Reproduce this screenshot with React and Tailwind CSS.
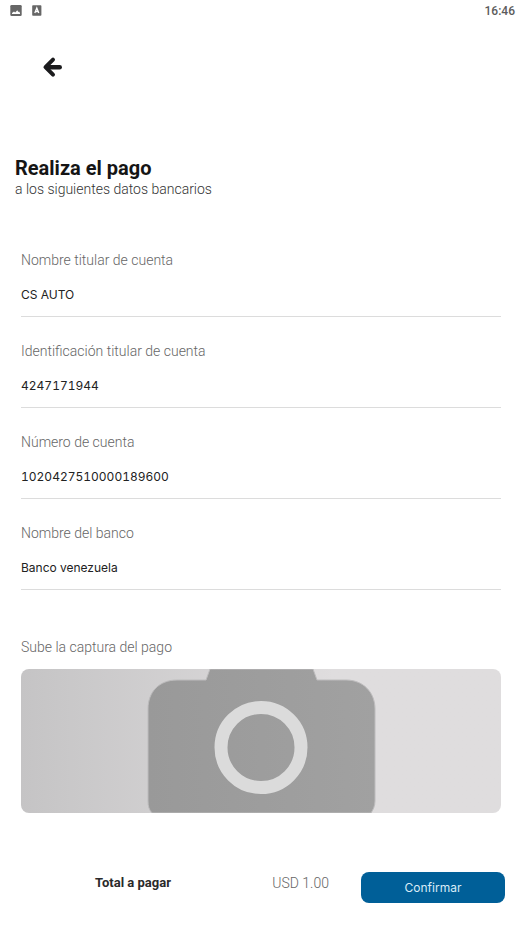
import { useState } from "react";

const initialFields = [
  { id: "holder", label: "Nombre titular de cuenta", value: "CS AUTO" },
  { id: "document", label: "Identificación titular de cuenta", value: "4247171944" },
  { id: "account", label: "Número de cuenta", value: "1020427510000189600" },
  { id: "bank", label: "Nombre del banco", value: "Banco venezuela" },
];

function StatusBar() {
  return (
    <div className="flex h-[22px] items-center justify-between pl-[10px] pr-[7px]">
      <div className="flex items-center gap-[10px]">
        <svg className="h-3 w-3" viewBox="0 0 12 12" aria-hidden="true">
          <rect x="0.3" y="0" width="11.4" height="11" rx="1.3" fill="#666" />
          <path d="M2 9V8L4 6.500l1.200 1.100L7.300 5.300l1 1.700.8-.5.9 1.400V9z" fill="#fff" />
        </svg>
        <svg className="h-3 w-[10px]" viewBox="0 0 10 12" aria-hidden="true">
          <rect x="0.2" y="0.2" width="9.2" height="10.6" rx="0.8" fill="#666" />
          <path d="M2.800 8 4.800 3 6.800 8M3.400 6.500h2.800" fill="none" stroke="#fff" strokeWidth="1.3" />
        </svg>
      </div>
      <time className="text-[12px] leading-4 font-medium text-[#5c5c5c]">16:46</time>
    </div>
  );
}

function Field({ id, label, value, onChange }) {
  return (
    <div className="flex h-[91px] flex-col">
      <label htmlFor={id} className="text-[14px] leading-5 font-light text-[#666]">
        {label}
      </label>
      <input
        id={id}
        value={value}
        onChange={onChange}
        className="mt-3 h-[35px] w-full border-b border-[#dcdcdc] bg-transparent pb-[10px] font-['Inter',sans-serif] text-[12px] leading-5 text-[#222] tabular-nums outline-none"
      />
    </div>
  );
}

function UploadBox() {
  return (
    <label
      htmlFor="capture"
      aria-label="Sube la captura del pago"
      className="mt-3 block h-36 cursor-pointer overflow-hidden rounded-lg bg-linear-to-r from-[#c5c4c5] via-[#dfddde] via-65% to-[#dfddde]"
    >
      <svg className="h-full w-full" viewBox="0 0 480 144" preserveAspectRatio="xMidYMid slice" aria-hidden="true">
        <defs>
          <linearGradient id="body" x1="0" x2="1" y1="0" y2="0">
            <stop offset="0" stopColor="#999" />
            <stop offset="1" stopColor="#a1a1a1" />
          </linearGradient>
        </defs>
        <path
          d="M127 40C127 23 138 11 156 11H185L189 0H292L296 11H325C342 11 354 23 354 40V132C354 137 352 141 350 144H131C128 141 127 137 127 132Z"
          fill="url(#body)"
          stroke="#bdbcbd"
          strokeWidth="1"
        />
        <circle cx="240" cy="78.500" r="40" fill="none" stroke="#dbdbdb" strokeWidth="13" />
      </svg>
      <input id="capture" type="file" accept="image/*" className="sr-only" />
    </label>
  );
}

export default function App() {
  const [fields, setFields] = useState(initialFields);
  const update = (id, value) =>
    setFields(fields.map((field) => (field.id === id ? { ...field, value } : field)));

  return (
    <main className="min-h-screen bg-white font-['Roboto',sans-serif]">
      <StatusBar />
      <header className="px-10 pt-8">
        <button type="button" aria-label="Volver" className="block h-[26px] w-[26px]">
          <svg className="h-[26px] w-[26px]" viewBox="0 0 26 26" fill="none" stroke="#1b1b1d" strokeLinecap="round" strokeLinejoin="round" aria-hidden="true">
            <path d="M13 5.700 5.500 13.200l7.500 7.500" strokeWidth="4" />
            <path d="M7 13.200h12.700" strokeWidth="4.500" />
          </svg>
        </button>
      </header>

      <section className="mt-[76px] px-[15px]">
        <h1 className="text-[20px] leading-6 font-bold text-[#151515]">Realiza el pago</h1>
        <p className="text-[14px] leading-[18px] font-light text-[#333]">a los siguientes datos bancarios</p>
      </section>

      <form onSubmit={(event) => event.preventDefault()}>
        <div className="mt-[52px] px-[21px]">
          {fields.map((field) => (
            <Field key={field.id} {...field} onChange={(event) => update(field.id, event.target.value)} />
          ))}
          <p className="mt-[23px] text-[14px] leading-5 font-light text-[#666]">Sube la captura del pago</p>
          <UploadBox />
        </div>

        <footer className="mt-[59px] flex items-start pr-[17px] pb-6">
          <div className="flex flex-1 items-center justify-between pt-px pr-8 pl-[95px]">
            <span className="text-[13px] leading-5 font-bold text-[#2a2a2a]">Total a pagar</span>
            <span className="text-[14px] leading-5 font-light text-[#666]">USD 1.00</span>
          </div>
          <button
            type="submit"
            className="h-[31px] w-36 rounded-lg bg-[#005f98] font-['Inter',sans-serif] text-[12px] leading-5 text-[#d9ecf7]"
          >
            Confirmar
          </button>
        </footer>
      </form>
    </main>
  );
}
